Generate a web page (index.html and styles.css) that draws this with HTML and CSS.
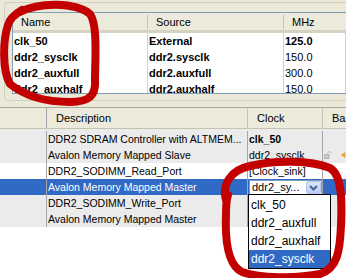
FILE: index.html
```html
<!DOCTYPE html>
<html lang="en">
<head>
    <meta charset="UTF-8">
    <title>Clock settings</title>
    <link rel="stylesheet" href="styles.css">
</head>
<body>
    <div class="top">
        <div class="group">
            <div class="list">
                <div class="list-head">
                    <div class="hcell">Name</div>
                    <div class="hcell">Source</div>
                    <div class="hcell last">MHz</div>
                </div>
                <div class="list-row">
                    <div class="cell b">clk_50</div>
                    <div class="cell b">External</div>
                    <div class="cell b">125.0</div>
                </div>
                <div class="list-row">
                    <div class="cell b">ddr2_sysclk</div>
                    <div class="cell b">ddr2.sysclk</div>
                    <div class="cell">150.0</div>
                </div>
                <div class="list-row">
                    <div class="cell b">ddr2_auxfull</div>
                    <div class="cell b">ddr2.auxfull</div>
                    <div class="cell">300.0</div>
                </div>
                <div class="list-row">
                    <div class="cell b">ddr2_auxhalf</div>
                    <div class="cell b">ddr2.auxhalf</div>
                    <div class="cell">150.0</div>
                </div>
            </div>
        </div>
    </div>

    <div class="table">
        <div class="thead">
            <div class="hcell"></div>
            <div class="hcell">Description</div>
            <div class="hcell">Clock</div>
            <div class="hcell last">Bas</div>
        </div>
        <div class="trow grey first">
            <div class="cell"></div>
            <div class="cell">DDR2 SDRAM Controller with ALTMEM...</div>
            <div class="cell b">clk_50</div>
            <div class="cell"></div>
        </div>
        <div class="trow grey">
            <div class="cell"></div>
            <div class="cell">Avalon Memory Mapped Slave</div>
            <div class="cell">ddr2_sysclk</div>
            <div class="cell icons">
                <svg width="9" height="10" viewBox="0 0 9 10">
                    <path d="M5 4 V2.5 A2 2 0 0 1 9 2.5 V3.5" fill="none" stroke="#b8b8b8" stroke-width="1.2"/>
                    <rect x="0.5" y="4.5" width="6" height="5" fill="#c8c8c8" stroke="#a8a8a8"/>
                </svg>
                <svg width="8" height="10" viewBox="0 0 8 10">
                    <path d="M1 5 L7 1 L7 9 Z" fill="#f0a030"/>
                </svg>
            </div>
        </div>
        <div class="trow">
            <div class="cell"></div>
            <div class="cell">DDR2_SODIMM_Read_Port</div>
            <div class="cell">[Clock_sink]</div>
            <div class="cell"></div>
        </div>
        <div class="trow selected">
            <div class="cell"></div>
            <div class="cell">Avalon Memory Mapped Master</div>
            <div class="cell">
                <div class="combo">
                    <span class="combo-text">ddr2_sy...</span>
                    <span class="combo-btn">
                        <svg width="9" height="6" viewBox="0 0 9 6">
                            <path d="M1 1 L4.5 4.5 L8 1" fill="none" stroke="#4d6185" stroke-width="2"/>
                        </svg>
                    </span>
                </div>
            </div>
            <div class="cell"></div>
        </div>
        <div class="trow grey">
            <div class="cell"></div>
            <div class="cell">DDR2_SODIMM_Write_Port</div>
            <div class="cell"></div>
            <div class="cell"></div>
        </div>
        <div class="trow grey">
            <div class="cell"></div>
            <div class="cell">Avalon Memory Mapped Master</div>
            <div class="cell"></div>
            <div class="cell"></div>
        </div>
    </div>

    <!-- open drop-down of the clock combo -->
    <div class="dropdown">
        <div class="option">clk_50</div>
        <div class="option">ddr2_auxfull</div>
        <div class="option">ddr2_auxhalf</div>
        <div class="option active">ddr2_sysclk</div>
    </div>

    <!-- red hand-drawn marks -->
    <svg class="marks" width="346" height="278" viewBox="0 0 346 278">
        <path d="M20 12 C40 2, 75 2, 90 14 C98 25, 95 60, 95 80 C96 95, 90 102, 70 102 C45 102, 25 96, 10 84 C2 70, 3 40, 8 25 C10 18, 15 14, 22 10"/>
        <path d="M226 200 C222 185, 230 170, 250 166 C275 160, 310 160, 330 168 C342 175, 342 200, 341 225 C340 250, 338 268, 320 274 C295 279, 260 278, 242 272 C228 265, 225 240, 226 215 C226 205, 226 200, 228 195"/>
    </svg>
</body>
</html>
```

FILE: styles.css
```css
body {
    margin: 0;
    width: 346px;
    height: 278px;
    overflow: hidden;
    position: relative;
    background: #ffffff;
    font-family: "Liberation Sans", Arial, sans-serif;
    font-size: 11px;
    color: #000000;
}
.b {
    font-weight: bold;
}

/* top panel with the clock list */
.top {
    height: 107px;
    background: #ece9d8;
    border-bottom: 1px solid #aca899;
    overflow: hidden;
}
.group {
    margin: 2px 0 0 4px;
    height: 99px;
    border: 1px solid #d0d0bf;
    border-right: none;
    border-radius: 4px 0 0 4px;
    padding: 9px 0 0 7px;
    box-sizing: border-box;
}
.list {
    height: 82px;
    box-sizing: border-box;
    border: 1px solid #7f9db9;
    border-right: none;
    background: #ffffff;
    overflow: hidden;
}
.list-head,
.list-row {
    display: grid;
    grid-template-columns: 135px 136px 1fr;
}
.list-head {
    height: 17px;
    background: #ebeadb;
    border-bottom: 3px solid #d6d2c2;
}
.hcell {
    line-height: 18px;
    padding-left: 8px;
    white-space: nowrap;
    overflow: hidden;
    background: linear-gradient(#c7c5b2, #c7c5b2) right 2px / 1px 14px no-repeat;
}
.hcell.last {
    background: none;
}
.list-row {
    height: 16px;
}
.list-row .cell {
    line-height: 16px;
    padding-left: 1px;
    border-right: 1px solid #d4d0c8;
    white-space: nowrap;
    overflow: hidden;
}

/* bottom table of ports */
.table {
    width: 346px;
    font-size: 10.5px;
}
.thead,
.trow {
    display: grid;
    grid-template-columns: 47px 201px 75px 1fr;
}
.thead {
    height: 20px;
    background: #ebeadb;
    border-bottom: 1px solid #c5c2b2;
    font-size: 11px;
}
.thead .hcell {
    line-height: 21px;
    padding-left: 9px;
    background: linear-gradient(#c7c5b2, #c7c5b2) right 0 / 1px 20px no-repeat;
}
.thead .hcell:first-child {
    background: linear-gradient(#a7a6aa, #a7a6aa) right 0 / 1px 20px no-repeat;
}
.thead .hcell.last {
    background: none;
}
.trow {
    height: 16px;
}
.trow.first {
    height: 18px;
    padding-top: 2px;
    box-sizing: border-box;
}
.trow.grey {
    background: #ebebeb;
}
.trow.selected {
    background: #316ac5;
    color: #ffffff;
}
.trow .cell {
    line-height: 16px;
    padding-left: 1px;
    border-right: 1px solid #a7a6aa;
    white-space: nowrap;
    overflow: hidden;
}
.trow .cell:last-child {
    border-right: none;
}
.icons {
    display: flex;
    align-items: center;
    gap: 9px;
    padding-left: 2px;
}

/* combo box inside the selected row */
.combo {
    display: flex;
    height: 15px;
    margin-top: 1px;
    width: 73px;
    box-sizing: border-box;
    border: 1px solid #7f9db9;
    background: #ffffff;
    color: #000000;
}
.combo-text {
    flex: 1;
    line-height: 13px;
    padding-left: 2px;
    font-size: 11px;
}
.combo-btn {
    width: 15px;
    display: flex;
    align-items: center;
    justify-content: center;
    background: linear-gradient(#dbe6fd, #b9cdf8);
    border: 1px solid #b6c8f2;
    border-radius: 2px;
    box-sizing: border-box;
}

.dropdown {
    position: absolute;
    left: 248px;
    top: 194px;
    width: 83px;
    height: 75px;
    box-sizing: border-box;
    border: 1px solid #000000;
    background: #ffffff;
    padding-top: 1px;
}
.option {
    height: 18px;
    line-height: 18px;
    padding-left: 2px;
    font-size: 12px;
}
.option.active {
    background: #316ac5;
    color: #ffffff;
}

.marks {
    position: absolute;
    left: 0;
    top: 0;
    pointer-events: none;
}
.marks path {
    fill: none;
    stroke: #c20000;
    stroke-width: 8;
    stroke-linecap: round;
    stroke-linejoin: round;
}
```
